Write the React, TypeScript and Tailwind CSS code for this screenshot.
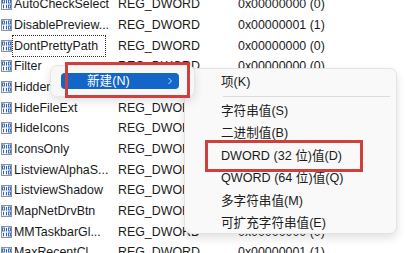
import React from "react";

const rows: [string, string][] = [
  ["AutoCheckSelect", "0x00000000 (0)"],
  ["DisablePreview...", "0x00000001 (1)"],
  ["DontPrettyPath", "0x00000000 (0)"],
  ["Filter", "0x00000000 (0)"],
  ["Hidden", "0x00000001 (1)"],
  ["HideFileExt", "0x00000000 (0)"],
  ["HideIcons", "0x00000000 (0)"],
  ["IconsOnly", "0x00000000 (0)"],
  ["ListviewAlphaS...", "0x00000001 (1)"],
  ["ListviewShadow", "0x00000001 (1)"],
  ["MapNetDrvBtn", "0x00000000 (0)"],
  ["MMTaskbarGl...", "0x00000000 (0)"],
  ["MaxRecentCl...", "0x00000001 (1)"],
];

function RegIcon() {
  const blue = "#2a63b8";
  return (
    <svg width="11" height="12" viewBox="0 0 11 12" className="shrink-0">
      <rect x="0.5" y="0.5" width="10" height="11" fill="#f4f6fa" stroke="#8a94a4" />
      <rect x="1.5" y="2" width="2" height="3" fill="none" stroke={blue} strokeWidth="0.9" />
      <rect x="5" y="2" width="1" height="3.5" fill={blue} />
      <rect x="7.5" y="2" width="2" height="3" fill="none" stroke={blue} strokeWidth="0.9" />
      <rect x="2" y="6.8" width="1" height="3.5" fill={blue} />
      <rect x="5" y="6.8" width="1" height="3.5" fill={blue} />
      <rect x="7.5" y="7" width="2" height="3" fill="none" stroke={blue} strokeWidth="0.9" />
    </svg>
  );
}

const subItems = [
  "字符串值(S)",
  "二进制值(B)",
  "DWORD (32 位)值(D)",
  "QWORD (64 位)值(Q)",
  "多字符串值(M)",
  "可扩充字符串值(E)",
];

export default function App() {
  return (
    <div
      className="relative w-[419px] h-[253px] overflow-hidden bg-white text-[#1a1a1a]"
      style={{ fontFamily: '"Liberation Sans", "Noto Sans CJK SC", sans-serif' }}
    >
      <div className="flex flex-col -mt-[6px]">
        {rows.map(([name, data], i) => (
          <div key={i} className="flex items-center h-[20.7px] pl-[1px] text-[12.4px] leading-none">
            <RegIcon />
            <div className="w-[106px] pl-[2px] flex items-center">
              <span
                className={
                  i === 2
                    ? "h-[20px] pl-[1px] pr-[7px] flex items-center outline outline-1 outline-dotted outline-[#333] -ml-[1px]"
                    : ""
                }
              >
                {name}
              </span>
            </div>
            <div className="w-[120px]">REG_DWORD</div>
            <div>{data}</div>
          </div>
        ))}
      </div>

      {/* Submenu */}
      <div className="absolute left-[184px] top-[68px] w-[213px] h-[166px] rounded-[7px] bg-[#f9f9f9] border border-[#e3e3e3] shadow-[0_4px_10px_rgba(0,0,0,0.12)] pt-[2px] text-[12.6px] text-[#1b1b1b]">
        <div className="h-[22px] flex items-center pl-[36px]">项(K)</div>
        <div className="h-[7px] flex items-center ml-[38px] mr-[6px]">
          <div className="h-px w-full bg-[#dcdcdc]" />
        </div>
        {subItems.map((t) => (
          <div key={t} className="h-[22.5px] flex items-center pl-[36px]">
            {t}
          </div>
        ))}
      </div>

      {/* Parent menu */}
      <div className="absolute left-[50px] top-[65px] w-[145px] h-[32px] rounded-[7px] bg-[#f7f7f7] border border-[#e6e6e6] shadow-[0_4px_10px_rgba(0,0,0,0.12)] pl-[10px] pt-[7px]">
        <div className="w-[118px] h-[16px] rounded-[4px] bg-[#1465c8] flex items-center justify-between pl-[26px] pr-[6px] text-white text-[12.6px]">
          <span>新建(N)</span>
          <svg width="6" height="8" viewBox="0 0 6 8">
            <path d="M1.5 1 L4.5 4 L1.5 7" fill="none" stroke="#cfe0f5" strokeWidth="1" />
          </svg>
        </div>
      </div>

      {/* Red highlight boxes */}
      <div className="absolute left-[65px] top-[62px] w-[125px] h-[36px] border-[3px] border-[#cf3f3d]" />
      <div className="absolute left-[205px] top-[140px] w-[158px] h-[32px] border-[3px] border-[#cf3f3d]" />
    </div>
  );
}
